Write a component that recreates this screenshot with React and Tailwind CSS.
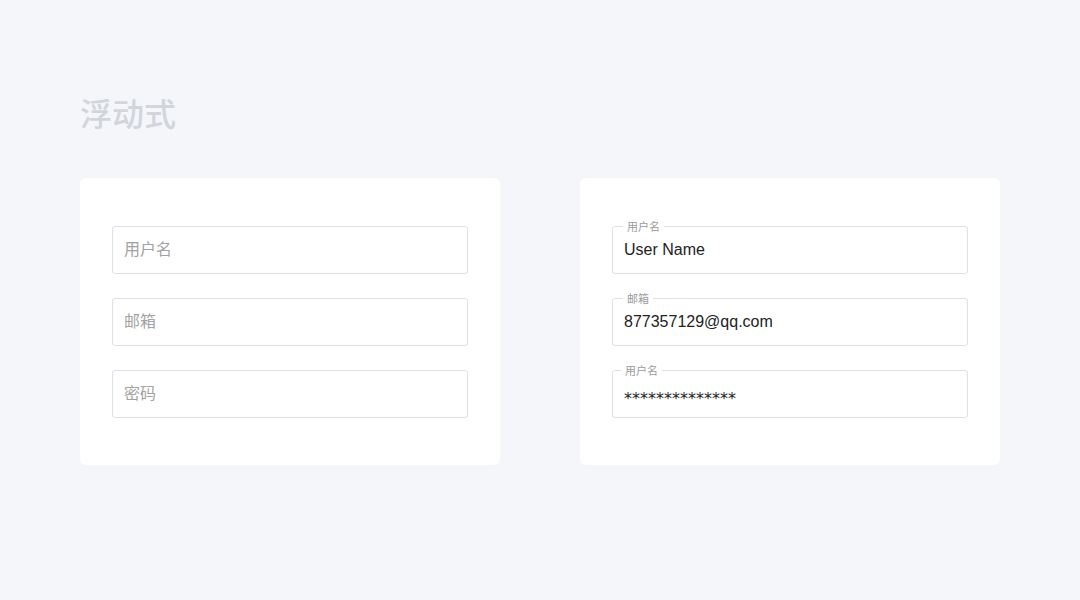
const font = { fontFamily: '"Liberation Sans", "Noto Sans CJK SC", sans-serif' };

const plain = ["用户名", "邮箱", "密码"];

const filled = [
  { label: "用户名", value: "User Name", left: "left-[10px]" },
  { label: "邮箱", value: "877357129@qq.com", left: "left-[10px]" },
  { label: "用户名", value: "**************", left: "left-[8px]", secret: true },
];

const FloatingField = ({ label, value, left, secret }) => (
  <div className="relative h-12 rounded-[3px] border border-[#dcdfe6] bg-white flex items-center px-[11px]">
    <span className={`absolute -top-[8px] ${left} bg-white px-1 text-[11px] leading-4 text-[#9b9b9b]`}>
      {label}
    </span>
    {secret ? (
      <span className="text-base text-[#222] translate-y-[5px]" style={{ fontFamily: '"DejaVu Sans", sans-serif' }}>
        {value}
      </span>
    ) : (
      <span className="text-base text-[#222]">{value}</span>
    )}
  </div>
);

export default function App() {
  return (
    <div className="min-h-[600px] w-[1080px] bg-[#f5f6fa] pt-[95px] pl-20" style={font}>
      <h1 className="text-[32px] leading-10 font-medium text-[#d2d5db]">浮动式</h1>

      <div className="mt-[43px] flex gap-20">
        {/* ── Placeholder style ── */}
        <div className="w-[420px] rounded-md bg-white px-8 pt-12 pb-[47px] flex flex-col gap-6">
          {plain.map((p) => (
            <div
              key={p}
              className="h-12 rounded-[3px] border border-[#dcdfe6] flex items-center px-[11px] text-base text-[#a2a2a2]"
            >
              {p}
            </div>
          ))}
        </div>

        {/* ── Floating label style ── */}
        <div className="w-[420px] rounded-md bg-white px-8 pt-12 pb-[47px] flex flex-col gap-6">
          {filled.map((f, i) => (
            <FloatingField key={i} {...f} />
          ))}
        </div>
      </div>
    </div>
  );
}
